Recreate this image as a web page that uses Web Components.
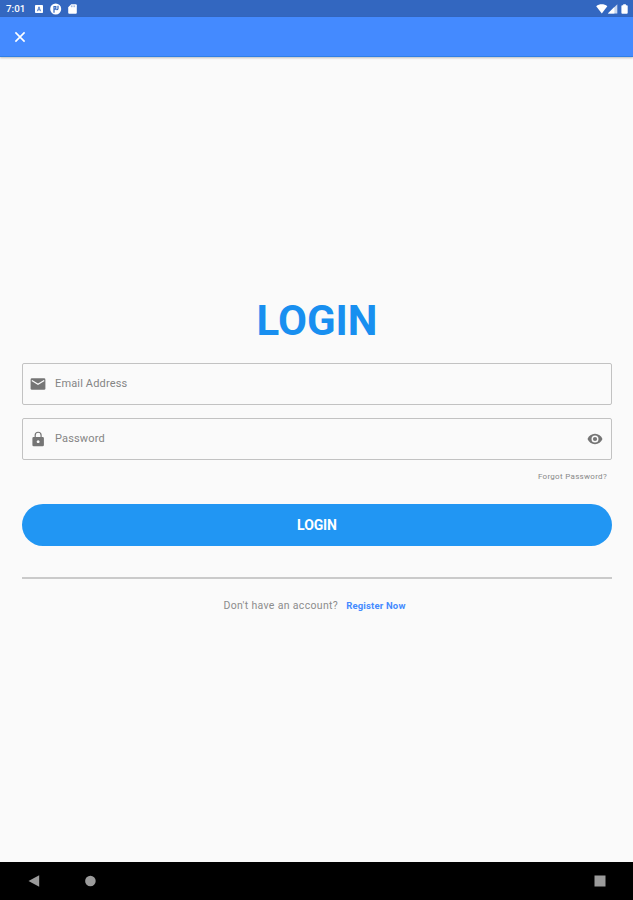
<!DOCTYPE html>
<html lang="en">
<head>
<meta charset="utf-8">
<title>Login</title>
<style>
html, body { margin: 0; height: 100%; background: #fafafa; }
body { font-family: Roboto, "Liberation Sans", sans-serif; overflow: hidden; }
</style>
</head>
<body>
<login-screen></login-screen>
<script>
const define = (name, html) => {
  const t = document.createElement('template');
  t.innerHTML = html;
  customElements.define(name, class extends HTMLElement {
    constructor() {
      super();
      this.attachShadow({ mode: 'open' }).append(t.content.cloneNode(true));
    }
  });
};

define('status-bar', `
<style>
:host { display: flex; align-items: center; height: 17px; box-sizing: border-box; background: #3367c0; color: #fff; padding: 1px 4px 0 6px; }
.time { font-size: 9.8px; font-weight: 500; line-height: 16px; width: 28px; white-space: nowrap; }
svg { display: block; fill: #fff; flex: none; }
.gap { flex: 1; }
</style>
<span class="time">7:01</span>
<svg width="46" height="16" viewBox="34 1 46 16">
  <rect x="35" y="5" width="8" height="8" rx=".8"/>
  <path d="M37.4 11.2 39 6.800l1.600 4.400M38 9.800h2" fill="none" stroke="#3367c0" stroke-width=".8"/>
  <circle cx="55.700" cy="9" r="5.500"/>
  <path d="M54 12.800V6.500h1.800v2.700h-1.800M58 5.700v2.700q0 1.300-1.500 1.300" fill="none" stroke="#3367c0" stroke-width="1.200"/>
  <path d="M71.2 4.300h4.600a1 1 0 0 1 1 1v7.500a1 1 0 0 1-1 1h-6.600a1 1 0 0 1-1-1V7.300z"/>
  <path d="M71.4 5.400v1.800M73 5.400v1.800M74.600 5.400v1.800" stroke="#3367c0" stroke-width=".5"/>
</svg>
<span class="gap"></span>
<svg width="34" height="16" viewBox="595 1 34 16">
  <path d="M596.2 6.300C599.300 3.700 604.200 3.700 607.300 6.300L601.800 13.600z"/>
  <path d="M617.3 4.200v9.400h-9.400z" opacity=".75"/>
  <path d="M614.4 7.100v6.500h-6.500z"/>
  <path d="M623.2 4.200h2.700v1h.9a.9.9 0 0 1 .9.9v6.700a.9.9 0 0 1-.9.9h-4.500a.9.9 0 0 1-.9-.9V6.100a.9.9 0 0 1 .9-.9h.9z"/>
</svg>`);

define('app-bar', `
<style>
:host { display: flex; align-items: center; height: 40px; box-sizing: border-box; padding: 0 14px; background: #448aff; border-bottom: 1px solid #2f7fe6; box-shadow: 0 1px 2px rgba(0,0,0,.25); }
svg { display: block; }
</style>
<svg width="12" height="12" viewBox="0 0 12 12"><path d="M1.400 1.400l9.200 9.200M10.600 1.400l-9.200 9.200" stroke="#fff" stroke-width="1.600"/></svg>`);

define('text-field', `
<style>
:host { display: flex; align-items: center; height: 42px; box-sizing: border-box; border: 1px solid #c2c2c2; border-radius: 2px; padding: 0 8px 0 7px; color: #858585; font-size: 11px; }
.label { flex: 1; margin-left: 9px; line-height: 16px; letter-spacing: .15px; }
::slotted(svg) { display: block; fill: #757575; }
</style>
<slot name="lead"></slot><span class="label"><slot></slot></span><slot name="trail"></slot>`);

define('pill-button', `
<style>
:host { display: flex; align-items: center; justify-content: center; height: 42px; border-radius: 21px; background: #2196f3; color: #fff; font-size: 14px; font-weight: 700; letter-spacing: -.1px; }
</style>
<slot></slot>`);

define('nav-bar', `
<style>
:host { display: flex; align-items: center; height: 38px; background: #000; padding: 0 27px 0 28px; }
svg { display: block; fill: #9b9b9b; }
svg:last-child { margin-left: auto; }
</style>
<svg width="69" height="12" viewBox="0 0 69 12"><path d="M.5 6 11.200.2v11.600z"/><circle cx="62.400" cy="6" r="5.300"/></svg>
<svg width="12" height="12" viewBox="0 0 12 12"><rect x=".5" y=".5" width="11" height="11"/></svg>`);

define('login-screen', `
<style>
:host { display: flex; flex-direction: column; height: 900px; background: #fafafa; }
app-bar { flex: none; }
main { flex: 1; padding: 239px 21px 0 22px; display: flex; flex-direction: column; }
h1 { margin: 0; font-size: 42px; line-height: 50px; font-weight: 700; color: #188ff0; text-align: center; }
text-field { margin-top: 13px; }
text-field.first { margin-top: 17px; }
.forgot { align-self: flex-end; margin: 11px 5px 0 0; font-size: 8px; letter-spacing: .3px; line-height: 12px; color: #888; }
pill-button { margin-top: 21px; }
hr { width: 100%; margin: 31px 0 0; border: 0; height: 2px; background: #cacaca; }
.register { display: flex; justify-content: center; gap: 8px; margin: 20px 5px 0 0; font-size: 10.5px; line-height: 14px; color: #8c8c8c; white-space: nowrap; }
.ask { letter-spacing: .33px; }
.link { color: #448aff; font-weight: 700; font-size: 9.500px; letter-spacing: .18px; }
</style>
<status-bar></status-bar>
<app-bar></app-bar>
<main>
  <h1>LOGIN</h1>
  <text-field class="first">
    <svg slot="lead" width="16" height="18" viewBox="0 0 16 18"><path d="M2 3.300h12a1.400 1.400 0 0 1 1.400 1.400v8.700a1.400 1.400 0 0 1-1.400 1.400H2A1.400 1.400 0 0 1 .6 13.400V4.700A1.400 1.400 0 0 1 2 3.300z"/><path d="M1.800 5.500 8 9.300l6.200-3.800" fill="none" stroke="#fafafa" stroke-width="1.300"/></svg>
    Email Address
  </text-field>
  <text-field>
    <svg slot="lead" width="16" height="18" viewBox="0 0 16 18"><path fill-rule="evenodd" d="M3.700 7h8.900a1.300 1.300 0 0 1 1.300 1.300v6.600a1.300 1.300 0 0 1-1.300 1.300H3.700a1.300 1.300 0 0 1-1.300-1.300V8.300A1.300 1.300 0 0 1 3.700 7zm4.450 3.200a1.450 1.450 0 1 0 .01 0z"/><path d="M5.200 7.400V5.200a2.950 2.950 0 0 1 5.900 0v2.200" fill="none" stroke="#757575" stroke-width="1.200"/></svg>
    Password
    <svg slot="trail" width="16" height="12" viewBox="0 0 16 12"><path fill-rule="evenodd" d="M8 .8C4.600.8 1.700 2.900.5 6c1.200 3.100 4.100 5.200 7.500 5.200s6.300-2.100 7.500-5.200C14.300 2.900 11.400.8 8 .8zm0 1.700a3.500 3.500 0 1 1 0 7 3.500 3.500 0 0 1 0-7z"/><circle cx="8" cy="6" r="2.100"/></svg>
  </text-field>
  <span class="forgot">Forgot Password?</span>
  <pill-button>LOGIN</pill-button>
  <hr>
  <div class="register"><span class="ask">Don't have an account?</span><span class="link">Register Now</span></div>
</main>
<nav-bar></nav-bar>`);
</script>
</body>
</html>
